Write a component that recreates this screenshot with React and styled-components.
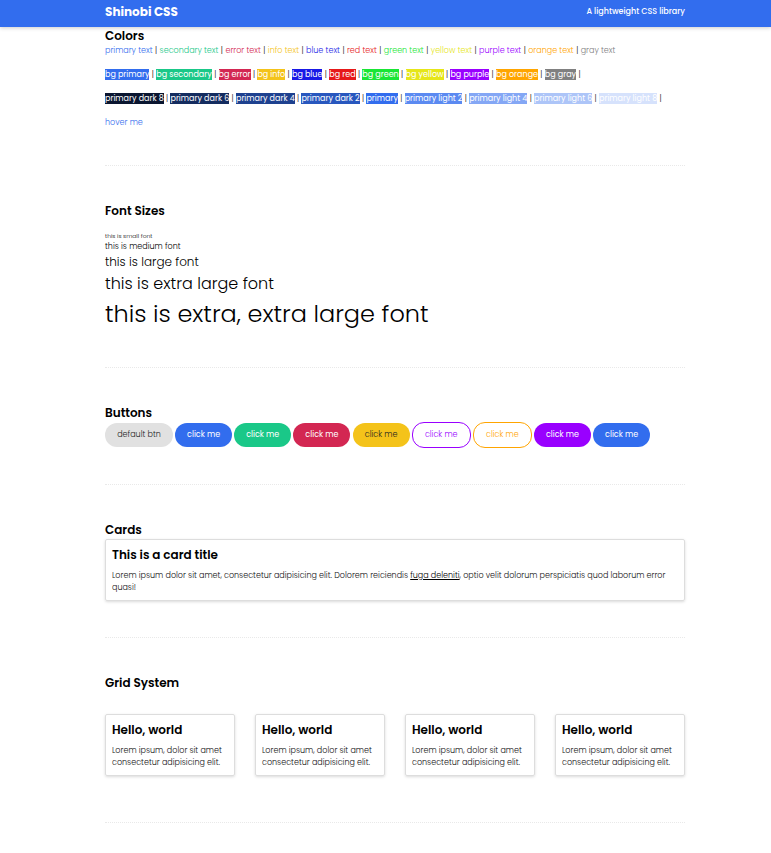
import React from "react";
import styled, { createGlobalStyle } from "styled-components";

const palette = {
  primary: "#326dee",
  secondary: "#1ac888",
  error: "#d32752",
  info: "#f4c31a",
  blue: "#1919e6",
  red: "#e61919",
  green: "#19e635",
  yellow: "#e6e619",
  purple: "#9900ff",
  orange: "#ffa500",
  gray: "#808080",
};

const GlobalStyle = createGlobalStyle`
  * { box-sizing: border-box; margin: 0; }
  body {
    background: #fff;
    color: #000;
    font: 300 8px/12px Poppins, Inter, sans-serif;
  }
`;

const Container = styled.div`
  max-width: 601px;
  margin: 0 auto;
  padding: 0 1px 0 20px;
`;

const Header = styled.header`
  background: ${palette.primary};
  color: #fff;
  box-shadow: 0 1px 4px rgba(0, 0, 0, 0.2);
`;

const HeaderBar = styled(Container)`
  display: flex;
  justify-content: space-between;
  align-items: center;
  height: 27px;
  padding-bottom: 4px;
`;

const Brand = styled.h1`
  font-size: 12px;
  font-weight: 700;
  line-height: 18px;
`;

const Tagline = styled.p`
  font-weight: 500;
`;

const Section = styled.section`
  padding-bottom: ${(p) => p.$bottom || 36}px;
  margin-bottom: 36px;
  border-bottom: 1px dotted #e9e9e9;
`;

const Title = styled.h2`
  font-size: 12px;
  font-weight: 600;
  line-height: 17px;
  margin-bottom: ${(p) => p.$gap || 0}px;
`;

const ColorRows = styled.div`
  display: grid;
  gap: 12px;
  margin-top: 1px;
`;

const ColorRow = styled.p`
  display: flex;
  justify-content: space-between;
  align-items: flex-start;
  width: ${(p) => p.$width}%;
  height: 12px;
  white-space: nowrap;
`;

const ColorText = styled.span`
  color: ${(p) => p.$color};
`;

const Swatch = styled.span`
  background: ${(p) => p.$color};
  color: #fff;
  font-weight: 400;
  line-height: 11px;
`;

const HoverLink = styled.a`
  color: ${palette.primary};
  text-decoration: none;
  &:hover { color: ${palette.secondary}; }
`;

const Sample = styled.p`
  font-size: ${(p) => p.$size}px;
  line-height: ${(p) => p.$line}px;
`;

const ButtonRow = styled.div`
  display: flex;
  align-items: center;
  justify-content: space-between;
  width: 94%;
  margin-top: 1px;
`;

const Button = styled.button`
  height: ${(p) => (p.$outline ? 26 : 24)}px;
  min-width: ${(p) => (p.$wide ? 68 : p.$outline ? 59 : 57)}px;
  padding: 0;
  border: ${(p) => (p.$outline ? `1px solid ${p.$color}` : 0)};
  border-radius: 12px;
  background: ${(p) => (p.$outline ? "#fff" : p.$color)};
  color: ${(p) => p.$text};
  font: inherit;
  font-weight: ${(p) => (p.$text === "#fff" ? 400 : 300)};
  white-space: nowrap;
  cursor: pointer;
  &:hover { opacity: 0.85; }
`;

const Card = styled.article`
  padding: 6px;
  border: 1px solid #ddd;
  border-radius: 2px;
  box-shadow: 0 1px 3px rgba(0, 0, 0, 0.15);
`;

const CardTitle = styled.h3`
  font-size: 12px;
  font-weight: 600;
  line-height: 18px;
  margin-bottom: 6px;
`;

const CardText = styled.p`
  color: #111;
`;

const CardLink = styled.a`
  color: #000;
`;

const Grid = styled.div`
  display: grid;
  grid-template-columns: repeat(4, 1fr);
  gap: 20px;
`;

const textColors = ["primary", "secondary", "error", "info", "blue", "red", "green", "yellow", "purple", "orange", "gray"];

const shades = [
  ["primary dark 8", "#0a1630"],
  ["primary dark 6", "#142c5f"],
  ["primary dark 4", "#1e418f"],
  ["primary dark 2", "#2857be"],
  ["primary", palette.primary],
  ["primary light 2", "#5b8af1"],
  ["primary light 4", "#84a7f5"],
  ["primary light 6", "#adc5f8"],
  ["primary light 8", "#d6e2fc"],
];

const samples = [
  ["small", 6, 9],
  ["medium", 8, 12],
  ["large", 12, 18],
  ["extra large", 16, 25],
  ["extra, extra large", 24, 35],
];

const buttons = [
  { color: palette.primary, text: "#fff" },
  { color: palette.secondary, text: "#fff" },
  { color: palette.error, text: "#fff" },
  { color: palette.info, text: "#222" },
  { color: palette.purple, text: palette.purple, outline: true },
  { color: palette.orange, text: palette.orange, outline: true },
  { color: palette.purple, text: "#fff" },
  { color: palette.primary, text: "#fff" },
];

export default function App() {
  return (
    <>
      <GlobalStyle />
      <Header>
        <HeaderBar>
          <Brand>Shinobi CSS</Brand>
          <Tagline>A lightweight CSS library</Tagline>
        </HeaderBar>
      </Header>
      <Container as="main">
        <Section>
          <Title>Colors</Title>
          <ColorRows>
            <ColorRow $width={88}>
              {textColors.map((name, i) => (
                <React.Fragment key={name}>
                  {i > 0 && <span>|</span>}
                  <ColorText $color={palette[name]}>{name} text</ColorText>
                </React.Fragment>
              ))}
            </ColorRow>
            <ColorRow $width={82}>
              {textColors.map((name) => (
                <React.Fragment key={name}>
                  <Swatch $color={palette[name]}>bg {name}</Swatch>
                  <span>|</span>
                </React.Fragment>
              ))}
            </ColorRow>
            <ColorRow $width={96}>
              {shades.map(([name, color]) => (
                <React.Fragment key={name}>
                  <Swatch $color={color}>{name}</Swatch>
                  <span>|</span>
                </React.Fragment>
              ))}
            </ColorRow>
            <p><HoverLink href="#hover">hover me</HoverLink></p>
          </ColorRows>
        </Section>

        <Section>
          <Title $gap={13}>Font Sizes</Title>
          {samples.map(([name, size, line]) => (
            <Sample key={name} $size={size} $line={line}>this is {name} font</Sample>
          ))}
        </Section>

        <Section>
          <Title>Buttons</Title>
          <ButtonRow>
            <Button $color="#e1e1e1" $text="#222" $wide>default btn</Button>
            {buttons.map((b, i) => (
              <Button key={i} $color={b.color} $text={b.text} $outline={b.outline}>click me</Button>
            ))}
          </ButtonRow>
        </Section>

        <Section>
          <Title $gap={1}>Cards</Title>
          <Card>
            <CardTitle>This is a card title</CardTitle>
            <CardText>
              Lorem ipsum dolor sit amet, consectetur adipisicing elit. Dolorem reiciendis{" "}
              <CardLink href="#card">fuga deleniti</CardLink>, optio velit dolorum perspiciatis quod laborum error quasi!
            </CardText>
          </Card>
        </Section>

        <Section $bottom={46}>
          <Title $gap={23}>Grid System</Title>
          <Grid>
            {[1, 2, 3, 4].map((n) => (
              <Card key={n}>
                <CardTitle>Hello, world</CardTitle>
                <CardText>Lorem ipsum, dolor sit amet consectetur adipisicing elit.</CardText>
              </Card>
            ))}
          </Grid>
        </Section>
      </Container>
    </>
  );
}
